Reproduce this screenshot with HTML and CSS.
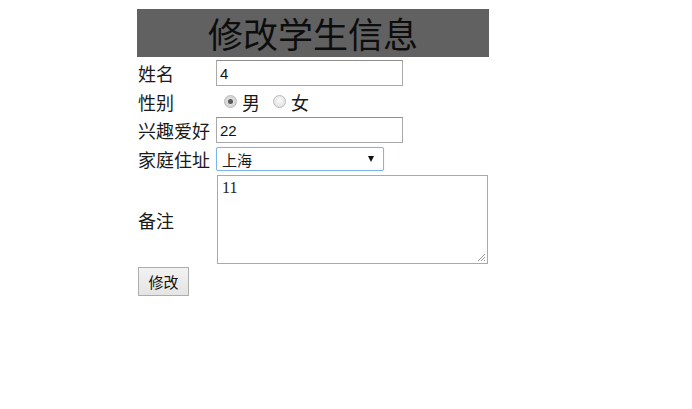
FILE: index.html
```html
<!DOCTYPE html>
<html lang="zh">
<head>
<meta charset="utf-8">
<title>修改学生信息</title>
<link rel="stylesheet" href="styles.css">
</head>
<body>
<form class="form">
  <div class="title">修改学生信息</div>
  <div class="row row-name">
    <span class="label">姓名</span>
    <input class="text" type="text" value="4">
  </div>
  <div class="row row-sex">
    <span class="label">性别</span>
    <span class="radios">
      <span class="radio checked"></span><span class="opt">男</span>
      <span class="radio radio2"></span><span class="opt">女</span>
    </span>
  </div>
  <div class="row row-hobby">
    <span class="label">兴趣爱好</span>
    <input class="text" type="text" value="22">
  </div>
  <div class="row row-addr">
    <span class="label">家庭住址</span>
    <span class="select"><span class="sel-text">上海</span><span class="arrow"></span></span>
  </div>
  <div class="row row-note">
    <span class="label">备注</span>
    <span class="textarea"><span class="ta-text">11</span><svg class="grip" width="9" height="9" viewBox="0 0 9 9"><path d="M8 1 L1 8 M8 4 L4 8 M8 7 L7 8" stroke="#9a9a9a" stroke-width="1" fill="none"/></svg></span>
  </div>
  <div class="row row-btn">
    <button class="btn" type="button">修改</button>
  </div>
</form>
</body>
</html>
```
FILE: styles.css
```css
html, body {
  margin: 0;
  padding: 0;
  background: #ffffff;
}
body {
  font-family: "Noto Sans CJK SC", "Liberation Sans", sans-serif;
  color: #1a1a1a;
}
.form {
  margin: 9px 0 0 137px;
  width: 352px;
}
.title {
  height: 48px;
  background: #616161;
  color: #0d0d0d;
  font-size: 35px;
  line-height: 48px;
  text-align: center;
}
.row {
  display: flex;
  align-items: center;
}
.label {
  width: 78px;
  padding-left: 1px;
  font-size: 18px;
  line-height: 20px;
  white-space: nowrap;
  flex: none;
}
.text {
  box-sizing: border-box;
  width: 187px;
  height: 26px;
  margin: 0;
  padding: 0 3px;
  border: 1px solid #a9a9a9;
  border-top-color: #8f8f8f;
  font-family: "Liberation Sans", sans-serif;
  font-size: 15px;
  color: #111;
  background: #fff;
  outline: none;
}
.row-name { margin-top: 3px; }
.row-sex { height: 31px; }
.row-hobby { height: 26px; }
.row-addr { margin-top: 4px; }
.row-note { margin-top: 4px; }
.row-btn { margin-top: 3px; }

.radios {
  display: flex;
  align-items: center;
  font-size: 18px;
}
.radio {
  box-sizing: border-box;
  width: 13px;
  height: 13px;
  border-radius: 50%;
  border: 1px solid #b9b9b9;
  background: radial-gradient(circle at 50% 40%, #fafafa, #dcdcdc);
  margin: 0 5px 0 8px;
  position: relative;
}
.radio.checked::after {
  content: "";
  position: absolute;
  left: 3px;
  top: 3px;
  width: 5px;
  height: 5px;
  border-radius: 50%;
  background: #595959;
}
.radio.checked {
  background: radial-gradient(circle, #e6e6e6, #cfcfcf);
}
.radio2 { margin-left: 13px; margin-right: 5px; }
.opt { line-height: 20px; }

.select {
  box-sizing: border-box;
  width: 168px;
  height: 24px;
  border: 1px solid #7eb4ea;
  border-radius: 2px;
  box-shadow: 0 0 1px #a9cdf2;
  display: flex;
  align-items: center;
  justify-content: space-between;
  padding: 0 9px 0 5px;
  font-size: 15px;
  background: #fff;
}
.sel-text { line-height: 20px; padding-top: 2px; }
.arrow {
  width: 0;
  height: 0;
  border-left: 3px solid transparent;
  border-right: 3px solid transparent;
  border-top: 6px solid #111;
}

.textarea {
  box-sizing: border-box;
  width: 271px;
  height: 89px;
  margin-left: 1px;
  border: 1px solid #a9a9a9;
  position: relative;
  padding: 3px 4px;
  font-family: "Liberation Serif", serif;
  font-size: 16px;
  color: #222;
  background: #fff;
}
.ta-text { display: block; line-height: 17px; }
.grip {
  position: absolute;
  right: 1px;
  bottom: 1px;
}

.btn {
  box-sizing: border-box;
  width: 51px;
  height: 29px;
  margin-left: 1px;
  padding: 0;
  border: 1px solid #adadad;
  background: linear-gradient(#f2f2f2, #e4e4e4);
  font-family: "Noto Sans CJK SC", sans-serif;
  font-size: 15px;
  color: #111;
}
```
